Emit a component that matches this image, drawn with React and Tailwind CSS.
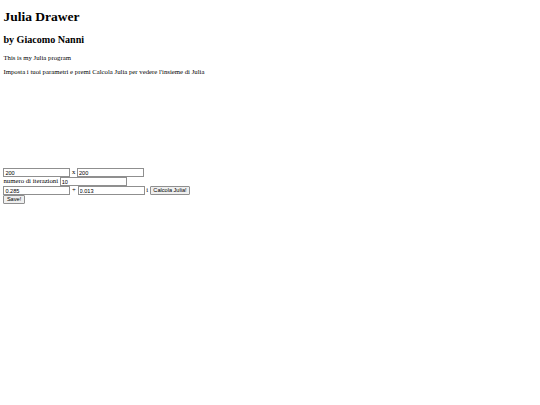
const serif = 'font-["Liberation_Serif",serif]'

function Field({ value, className = '' }) {
    return (
        <input
            readOnly
            value={value}
            className={`inline-block h-[8.5px] w-[67px] align-middle border border-[#8f8f8f] bg-white px-[1px] text-[5.6px] leading-none text-black font-["Liberation_Sans",sans-serif] outline-none ${className}`}
        />
    )
}

function Btn({ children }) {
    return (
        <button className='inline-block h-[8.5px] align-middle rounded-[1px] border border-[#8f8f8f] bg-[#efefef] px-[2.5px] text-[5.6px] leading-none text-black font-["Liberation_Sans",sans-serif]'>
            {children}
        </button>
    )
}

export default function App() {
    return (
        <div className={`min-h-[405px] w-[540px] bg-white px-[3.4px] pt-[0.1px] text-black ${serif}`}>
            <h1 className="my-[9px] text-[13.5px] font-bold leading-[15.5px]">Julia Drawer</h1>
            <h2 className="my-[8.4px] text-[10.1px] font-bold leading-[11.6px]">by Giacomo Nanni</h2>
            <p className="my-[6.75px] text-[6.75px] leading-[7.7px]">This is my Julia program</p>
            <p className="my-[6.75px] text-[6.75px] leading-[7.7px]">
                Imposta i tuoi parametri e premi Calcola Julia per vedere l'insieme di Julia
            </p>
            <div className="h-[86px] w-[84px]" />
            <div className="flex flex-col gap-[0.5px] text-[6.75px] leading-[8.5px]">
                <div className="flex items-center">
                    <Field value="200" />
                    <span className="mx-[1.6px]">x</span>
                    <Field value="200" />
                </div>
                <div className="flex items-center">
                    <span className="mr-[1.6px]">numero di iterazioni</span>
                    <Field value="10" />
                </div>
                <div className="flex items-center">
                    <Field value="0.285" />
                    <span className="mx-[1.7px]">+</span>
                    <Field value="0.013" />
                    <span className="mx-[1.7px]">i</span>
                    <Btn>Calcola Julia!</Btn>
                </div>
                <div className="flex items-center">
                    <Btn>Save!</Btn>
                </div>
            </div>
        </div>
    )
}
